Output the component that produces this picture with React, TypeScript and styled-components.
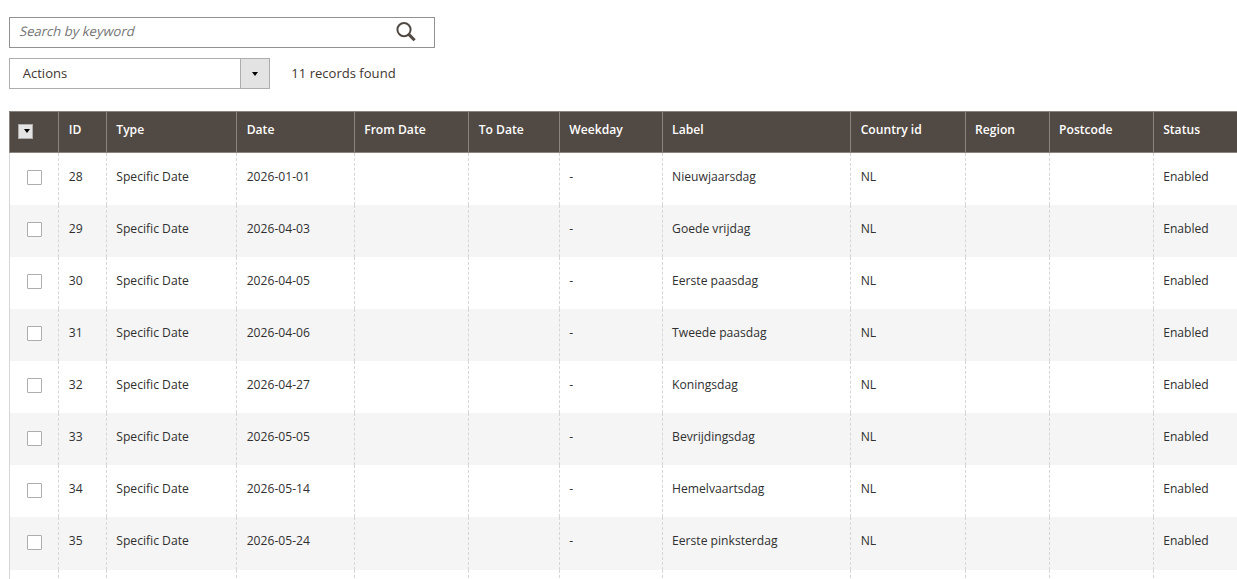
import React from 'react';
import styled, { createGlobalStyle } from 'styled-components';

const GlobalStyle = createGlobalStyle`
  * { box-sizing: border-box; }
  html, body { margin: 0; height: 100%; overflow: hidden; background: #fff; }
  body { font-family: 'Open Sans', 'Noto Sans', sans-serif; font-size: 13.07px; color: #41362f; }
`;

const Page = styled.main`
  height: 579px;
  padding: 17px 0 0 9px;
  overflow: hidden;
`;

const SearchBox = styled.div`
  display: flex;
  align-items: center;
  width: 426px;
  height: 31px;
  padding: 0 18px 0 9.4px;
  border: 1px solid #949191;
`;

/* Slants the upright face, which is wider than the family's own italic. */
const SearchInput = styled.input`
  flex: 1;
  min-width: 0;
  height: 29px;
  padding: 0 0 3px;
  border: 0;
  outline: 0;
  background: transparent;
  font: 13.07px 'Open Sans', sans-serif;
  color: #303030;
  transform: skewX(-14deg);
  transform-origin: 0 18px;
  &::placeholder { color: #757575; opacity: 1; }
`;

const SearchButton = styled.button`
  display: flex;
  padding: 0 0 2px;
  border: 0;
  background: none;
  svg { display: block; }
`;

const Toolbar = styled.div`
  display: flex;
  align-items: center;
  gap: 21.3px;
  margin-top: 10px;
`;

const Select = styled.div`
  display: flex;
  width: 261px;
  height: 31px;
  border: 1px solid #adadad;
`;

const SelectLabel = styled.span`
  flex: 1;
  padding-left: 12.7px;
  line-height: 29px;
`;

const SelectArrow = styled.span`
  display: flex;
  align-items: center;
  justify-content: center;
  width: 29px;
  border-left: 1px solid #adadad;
  background: #e3e3e3;
`;

const Caret = styled.i`
  width: 0;
  height: 0;
  border: 3px solid transparent;
  border-top: 4px solid #000;
  border-bottom: 0;
`;

const Records = styled.span`
  line-height: 29px;
`;

const Grid = styled.div`
  width: 1312px;
  margin-top: 22px;
  font-size: 12.13px;
`;

const Row = styled.div<{ $striped?: boolean }>`
  display: grid;
  grid-template-columns: 49.45px 47.55px 130.4px 117.5px 114.5px 90.6px 102.8px 188.6px 114.4px 84px 104.1px 168px;
  height: 52.1px;
  background: ${(p) => (p.$striped ? '#f5f5f5' : '#fff')};
`;

const HeaderRow = styled(Row)`
  height: 41.8px;
  background: #514943;
  border-top: 1px solid #8a837f;
  border-bottom: 1px solid #8a837f;
`;

const HeaderCell = styled.div<{ $first?: boolean }>`
  padding: ${(p) => (p.$first ? '12px 0 0 8px' : '9px 0 0 9.3px')};
  border-left: 1px solid #8a837f;
  line-height: 17px;
  font-weight: 600;
  color: #fff;
  white-space: nowrap;
`;

const Cell = styled.div<{ $first?: boolean }>`
  padding: ${(p) => (p.$first ? '17.25px 0 0 17px' : '15px 0 0 9.3px')};
  border-left: 1px ${(p) => (p.$first ? 'solid' : 'dashed')} #d6d6d6;
  line-height: 17px;
  color: #303030;
  white-space: nowrap;
`;

const MultiSelect = styled.button`
  display: flex;
  align-items: center;
  justify-content: flex-end;
  width: 15px;
  height: 15px;
  padding: 0 2px 1px 0;
  border: 1px solid #adadad;
  background: #e3e3e3;
`;

const Checkbox = styled.input`
  appearance: none;
  display: block;
  width: 15px;
  height: 15px;
  margin: 0;
  border: 1px solid #adadad;
  border-radius: 1px;
  background: #fff;
`;

const headings = ['ID', 'Type', 'Date', 'From Date', 'To Date', 'Weekday', 'Label', 'Country id', 'Region', 'Postcode', 'Status'];

const holidays: [number, string, string][] = [
  [28, '2026-01-01', 'Nieuwjaarsdag'],
  [29, '2026-04-03', 'Goede vrijdag'],
  [30, '2026-04-05', 'Eerste paasdag'],
  [31, '2026-04-06', 'Tweede paasdag'],
  [32, '2026-04-27', 'Koningsdag'],
  [33, '2026-05-05', 'Bevrijdingsdag'],
  [34, '2026-05-14', 'Hemelvaartsdag'],
  [35, '2026-05-24', 'Eerste pinksterdag'],
];

export default function App() {
  return (
    <Page>
      <GlobalStyle />
      <SearchBox>
        <SearchInput placeholder="Search by keyword" />
        <SearchButton aria-label="Search">
          <svg width="20" height="20" viewBox="0 0 20 20" fill="none" stroke="#514943">
            <circle cx="8" cy="7.6" r="6.6" strokeWidth="2" />
            <path d="M12.8 12.4L18.6 18.2" strokeWidth="3" />
          </svg>
        </SearchButton>
      </SearchBox>
      <Toolbar>
        <Select>
          <SelectLabel>Actions</SelectLabel>
          <SelectArrow><Caret /></SelectArrow>
        </Select>
        <Records>11 records found</Records>
      </Toolbar>
      <Grid>
        <HeaderRow>
          <HeaderCell $first>
            <MultiSelect aria-label="Select rows"><Caret /></MultiSelect>
          </HeaderCell>
          {headings.map((h) => <HeaderCell key={h}>{h}</HeaderCell>)}
        </HeaderRow>
        {holidays.map(([id, date, label], i) => (
          <Row key={id} $striped={i % 2 === 1}>
            <Cell $first><Checkbox type="checkbox" /></Cell>
            <Cell>{id}</Cell>
            <Cell>Specific Date</Cell>
            <Cell>{date}</Cell>
            <Cell />
            <Cell />
            <Cell>-</Cell>
            <Cell>{label}</Cell>
            <Cell>NL</Cell>
            <Cell />
            <Cell />
            <Cell>Enabled</Cell>
          </Row>
        ))}
        <Row>
          <Cell $first />
          {headings.map((h) => <Cell key={h} />)}
        </Row>
      </Grid>
    </Page>
  );
}
